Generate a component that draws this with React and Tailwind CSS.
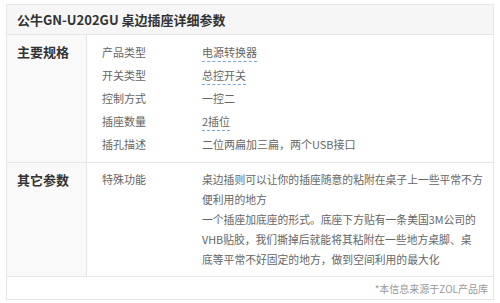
const mainSpecs = [
  { label: "产品类型", value: "电源转换器", link: true },
  { label: "开关类型", value: "总控开关", link: true },
  { label: "控制方式", value: "一控二" },
  { label: "插座数量", value: "2插位", link: true },
  { label: "插孔描述", value: "二位两扁加三扁，两个USB接口" },
];

const featureLines = [
  "桌边插则可以让你的插座随意的粘附在桌子上一些平常不方",
  "便利用的地方",
  "一个插座加底座的形式。底座下方贴有一条美国3M公司的",
  "VHB贴胶，我们撕掉后就能将其粘附在一些地方桌脚、桌",
  "底等平常不好固定的地方，做到空间利用的最大化",
];

function SpecValue({ value, link }) {
  if (!link) return <span>{value}</span>;
  return (
    <span className="border-b border-dashed border-[#7aa5de] pb-[1px]">
      {value}
    </span>
  );
}

function Section({ title, children }) {
  return (
    <div className="flex border-b border-[#e6e6e6]">
      <div className="w-[80px] shrink-0 bg-[#f9f9f9] border-r border-[#e6e6e6] pl-[10px] pt-[6px] text-[13px] font-bold text-[#333] leading-[22px]">
        {title}
      </div>
      <div className="flex-1">{children}</div>
    </div>
  );
}

export default function App() {
  return (
    <div
      className="w-[500px] h-[303px] bg-white pt-[4px] px-[6px]"
      style={{ fontFamily: '"Noto Sans CJK SC", "Noto Sans", sans-serif' }}
    >
      <div className="w-[488px] border border-[#e6e6e6]">
        {/* header */}
        <div className="h-[30px] bg-[#f6f6f6] border-b border-[#e6e6e6] pl-[10px] flex items-center text-[13px] font-bold text-[#333]">
          公牛GN-U202GU 桌边插座详细参数
        </div>

        {/* 主要规格 */}
        <Section title="主要规格">
          <div className="pt-[6px] pb-[6px]">
            {mainSpecs.map((row) => (
              <div
                key={row.label}
                className="flex h-[23px] items-center text-[11px] text-[#666]"
              >
                <div className="w-[115px] shrink-0 pl-[15px]">{row.label}</div>
                <div>
                  <SpecValue value={row.value} link={row.link} />
                </div>
              </div>
            ))}
          </div>
        </Section>

        {/* 其它参数 */}
        <Section title="其它参数">
          <div className="flex pt-[6px] pb-[7px] text-[11px] text-[#666] leading-[20px]">
            <div className="w-[115px] shrink-0 pl-[15px]">特殊功能</div>
            <div className="whitespace-nowrap text-[10.8px]">
              {featureLines.map((line) => (
                <div key={line}>{line}</div>
              ))}
            </div>
          </div>
        </Section>

        {/* footer note */}
        <div className="h-[22px] flex items-center justify-end pr-[5px] text-[10px] text-[#999]">
          *本信息来源于ZOL产品库
        </div>
      </div>
    </div>
  );
}
